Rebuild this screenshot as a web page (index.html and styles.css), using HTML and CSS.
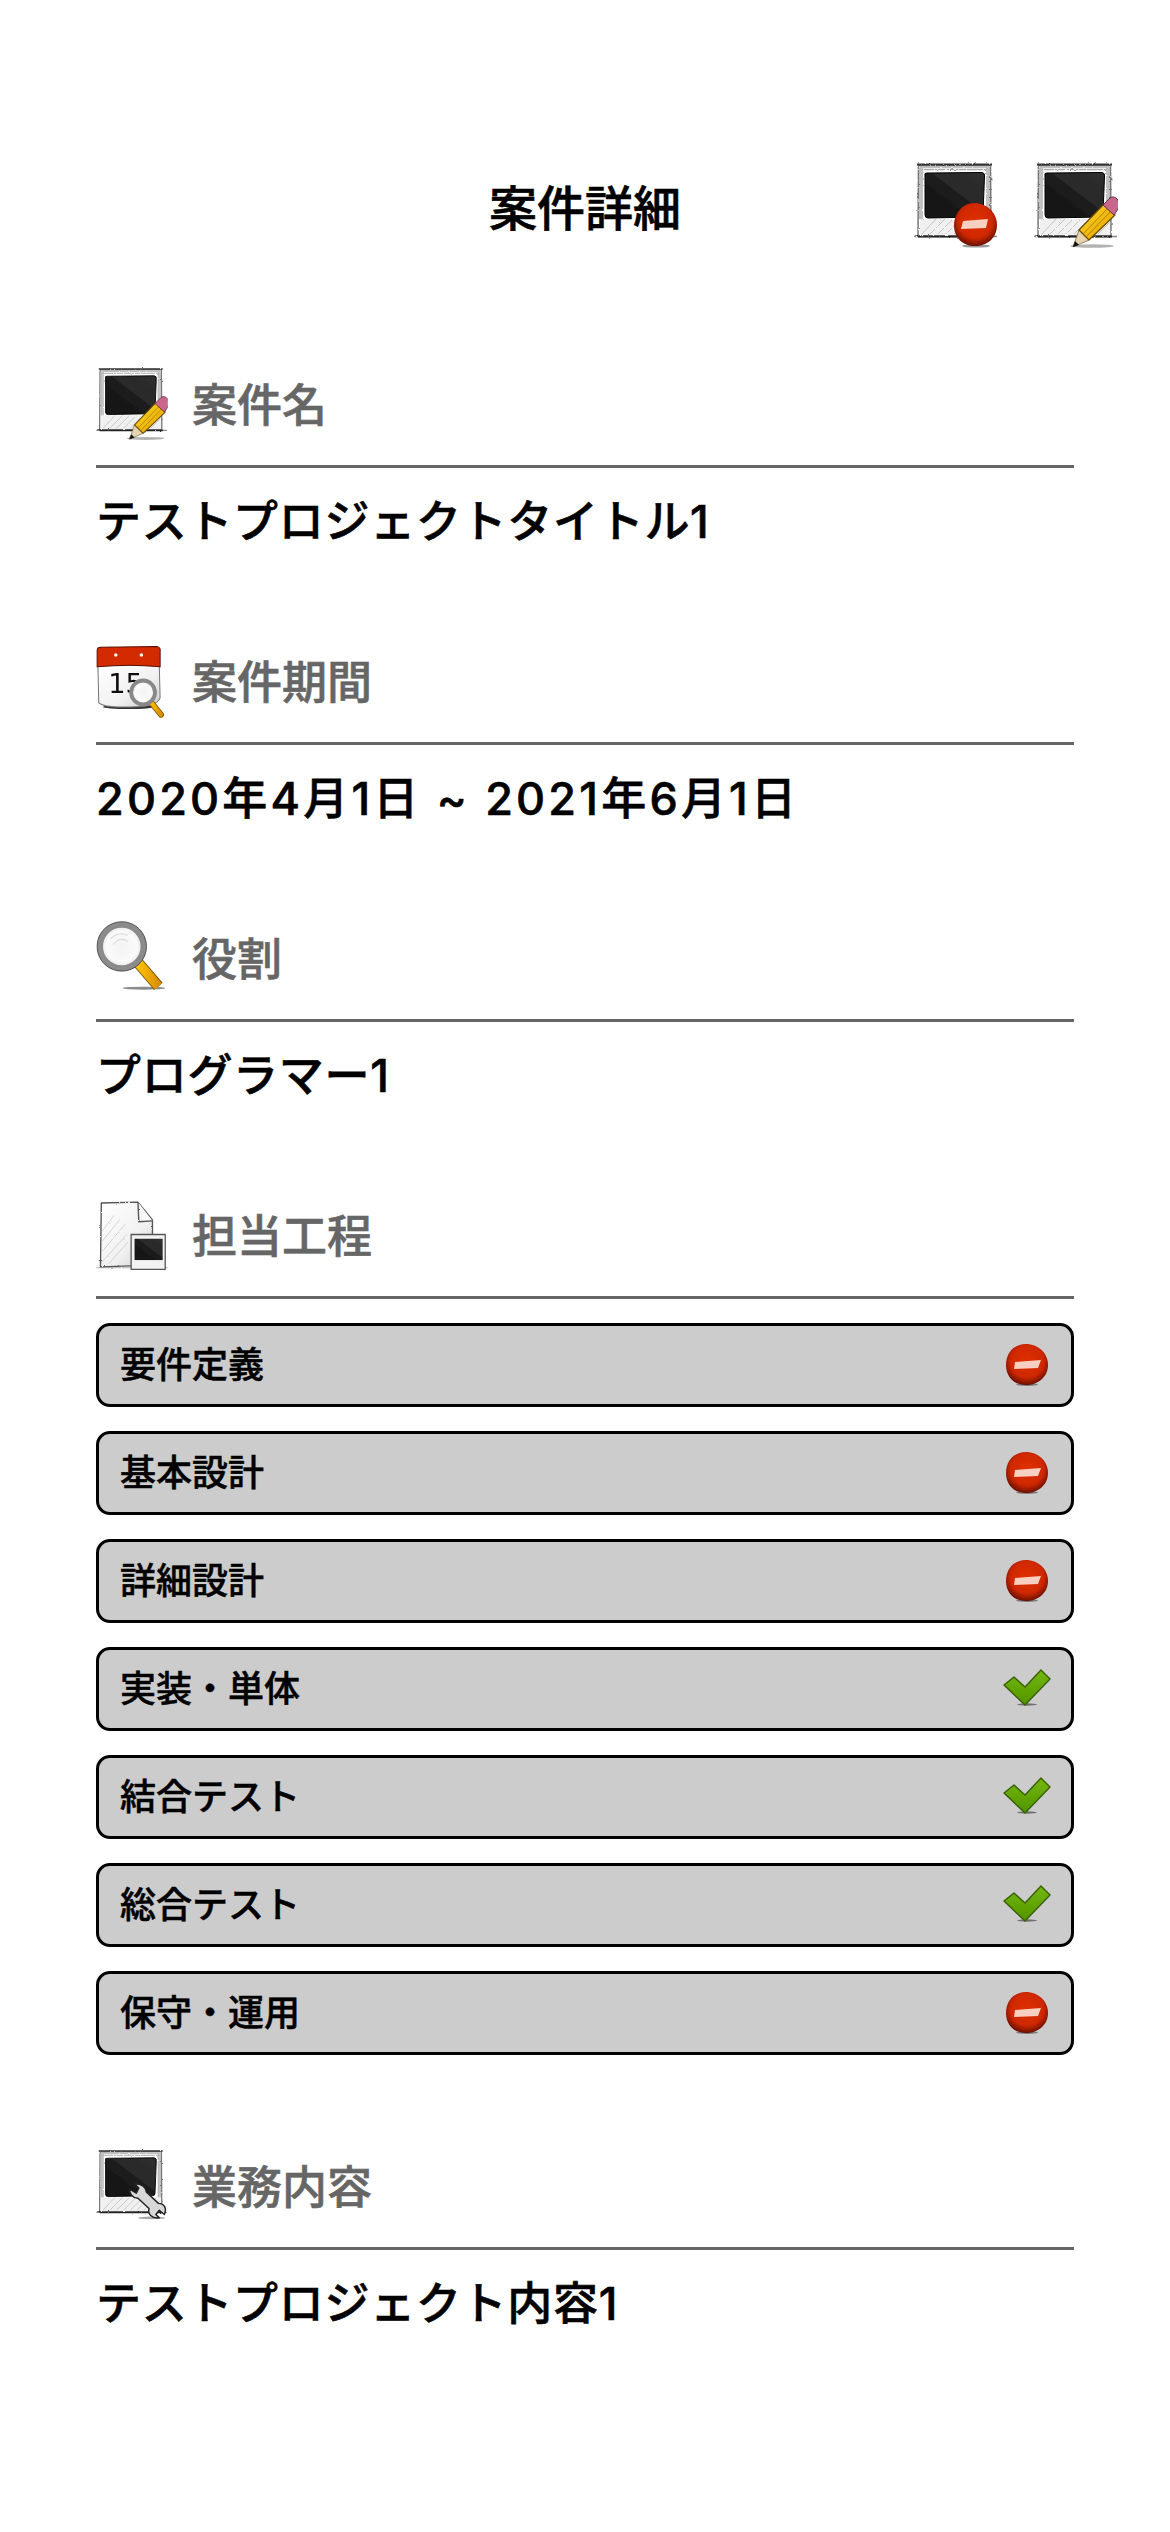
FILE: index.html
```html
<!DOCTYPE html>
<html lang="ja">
<head>
<meta charset="utf-8">
<title>案件詳細</title>
<link rel="stylesheet" href="styles.css">
</head>
<body>
<svg class="defs" aria-hidden="true">
  <defs>
    <filter id="soft" x="-10%" y="-10%" width="120%" height="120%"><feGaussianBlur stdDeviation=".45"/></filter>
    <filter id="sketch" x="-10%" y="-10%" width="120%" height="120%"><feTurbulence type="fractalNoise" baseFrequency=".35" numOctaves="2" seed="4"/><feDisplacementMap in="SourceGraphic" scale="2.500"/><feGaussianBlur stdDeviation=".35"/></filter>
    <linearGradient id="gScreen" x1="0" y1="1" x2="1" y2="0"><stop offset="0" stop-color="#111"/><stop offset=".55" stop-color="#1d1d1d"/><stop offset=".56" stop-color="#2a2a2a"/><stop offset="1" stop-color="#2e2e2e"/></linearGradient>
    <linearGradient id="gPaper" x1="0" y1="0" x2="1" y2="1"><stop offset="0" stop-color="#fff"/><stop offset=".6" stop-color="#f1f1f1"/><stop offset="1" stop-color="#c9c9c9"/></linearGradient>
    <radialGradient id="gRed" cx=".5" cy=".42" r=".58"><stop offset="0" stop-color="#e03000"/><stop offset=".68" stop-color="#cf2800"/><stop offset="1" stop-color="#6a1000"/></radialGradient>
    <linearGradient id="gPencil" x1="0" y1="0" x2="1" y2="1"><stop offset="0" stop-color="#ffdd22"/><stop offset="1" stop-color="#e09a00"/></linearGradient>
    <linearGradient id="gHandle" x1="0" y1="0" x2="1" y2="0"><stop offset="0" stop-color="#ffc400"/><stop offset="1" stop-color="#d98f00"/></linearGradient>
    <linearGradient id="gGreen" x1="0" y1="0" x2="0" y2="1"><stop offset="0" stop-color="#76b80c"/><stop offset="1" stop-color="#4f9400"/></linearGradient>
    <radialGradient id="gLens" cx=".5" cy=".5" r=".5"><stop offset="0" stop-color="#f3f3f3"/><stop offset=".7" stop-color="#fafafa"/><stop offset="1" stop-color="#e4e4e4"/></radialGradient>
    <symbol id="frame" viewBox="0 0 84 88">
      <g filter="url(#sketch)">
        <path d="M0 75.500H83" stroke="#555" stroke-width="1.500" opacity=".7"/>
        <path d="M4.500 4.500L76.500 4 77 75 4 75Z" fill="#fff" stroke="#777" stroke-width="1.500" stroke-linejoin="round"/>
        <path d="M3 3.500H78" stroke="#333" stroke-width="2"/>
        <path d="M6 6H75M6 8.500H75" stroke="#aaa" stroke-width="1.400"/>
        <path d="M6 7V58M8 7V58M73 7V58M75 7V58" stroke="#bbb" stroke-width="1.800"/>
        <path d="M6 58H76V74H6Z" fill="#f0f0f0"/>
        <path d="M8 73L22 58M16 73L31 58M24 73L39 58M32 73L47 58M40 73L55 58M48 73L63 58M56 73L71 58M64 73L75 62" stroke="#c4c4c4" stroke-width="1"/>
        <path d="M4 75.500H78" stroke="#222" stroke-width="2.200"/>
      </g>
      <path d="M11 14Q10 12 13 12L68 11.500Q71 12 70.500 15L69 53Q69 56 66 56L14 57Q11 57 11 54Z" fill="url(#gScreen)" stroke="#000" stroke-width="1" filter="url(#soft)"/>
    </symbol>
    <symbol id="badge-lg" viewBox="0 0 84 88">
      <g filter="url(#soft)">
        <ellipse cx="62" cy="85" rx="14" ry="1.600" fill="#000" opacity=".4"/>
        <path d="M60 42C73 42 83 52 83 64C83 77 73 85 61 85C49 85 40 77 40 64C40 53 48 42 60 42Z" fill="url(#gRed)"/>
        <path d="M49 60L74 58 72 67 47 68Z" fill="#f8d0c2"/>
      </g>
    </symbol>
    <symbol id="pencil" viewBox="0 0 84 88">
      <g filter="url(#soft)">
        <ellipse cx="58" cy="85" rx="22" ry="1.800" fill="#000" opacity=".3"/>
        <path d="M39 86L45 69 55 79Z" fill="#e8d3b0" stroke="#665533" stroke-width=".7"/>
        <path d="M39 86L41 80 45 84Z" fill="#111"/>
        <path d="M45 69L70 43 81 54 55 79Z" fill="url(#gPencil)" stroke="#6a4a00" stroke-width="1.200" stroke-linejoin="round"/>
        <path d="M49 73L74 47M52 76L77 50" stroke="#a87400" stroke-width=".8"/>
        <path d="M69 44L76 37Q80 34 84 39Q87 44 84 48L80 54Z" fill="#c9668c" stroke="#66304a" stroke-width="1"/>
      </g>
    </symbol>
    <symbol id="wrench" viewBox="0 0 84 88">
      <g filter="url(#soft)">
        <ellipse cx="65" cy="82" rx="16" ry="1.600" fill="#000" opacity=".35"/>
        <path d="M39 48L47 53 50 47 45 42C52 42 58 45 59 52L73 65C80 65 83 71 80 78L74 73 70 78 74 82C65 83 60 77 62 71L49 59C43 59 39 54 39 48Z" fill="#d8d8d8" stroke="#222" stroke-width="1.700" stroke-linejoin="round"/>
      </g>
    </symbol>
    <symbol id="calendar" viewBox="0 0 84 88">
      <g filter="url(#soft)">
        <ellipse cx="38" cy="75" rx="30" ry="2.500" fill="#000" opacity=".8"/>
        <path d="M2 26H74L75 64Q72 75 40 75Q8 76 3 70Z" fill="url(#gPaper)" stroke="#777" stroke-width="1.200"/>
        <path d="M1 9Q1 5 5 5L71 4Q76 5 75 10L75 28Q40 24 1 28Z" fill="#d42c00" stroke="#5a1000" stroke-width="1.200"/>
        <circle cx="23" cy="14" r="2" fill="#fff"/><circle cx="53" cy="14" r="2" fill="#fff"/>
        <text x="14" y="59" class="cal-num">15</text>
        <path d="M63 68L76 84" stroke="#7a5600" stroke-width="7" stroke-linecap="round"/>
        <path d="M63 68L76 84" stroke="url(#gHandle)" stroke-width="5" stroke-linecap="round"/>
        <circle cx="55" cy="58" r="14" fill="url(#gLens)" stroke="#888" stroke-width="4.500"/>
      </g>
    </symbol>
    <symbol id="magnifier" viewBox="0 0 84 88">
      <g filter="url(#soft)">
        <ellipse cx="56" cy="80" rx="25" ry="1.800" fill="#000" opacity=".45"/>
        <path d="M49 50L73 78" stroke="#6f4f00" stroke-width="13"/>
        <path d="M49 50L73 78" stroke="url(#gHandle)" stroke-width="11"/>
        <circle cx="30" cy="31" r="25.500" fill="url(#gLens)" stroke="#8b8b8b" stroke-width="7"/>
        <circle cx="30" cy="31" r="29" fill="none" stroke="#444" stroke-width="1"/>
        <path d="M17 22Q25 13 37 18M20 29Q27 19 37 25" stroke="#ddd" stroke-width="1.500" fill="none"/>
      </g>
    </symbol>
    <symbol id="doc" viewBox="0 0 84 88">
      <g filter="url(#sketch)">
        <path d="M6 7L49 6 66 27 66 80 5 82Z" fill="url(#gPaper)" stroke="#555" stroke-width="1.600" stroke-linejoin="round"/>
        <path d="M49 6L50 29 66 28" fill="#f8f8f8" stroke="#555" stroke-width="1.600" stroke-linejoin="round"/>
        <path d="M7 40L22 20M7 52L28 26M7 64L34 32M7 76L36 44M14 79L38 52" stroke="#ccc" stroke-width="1"/>
        <path d="M0 83H84" stroke="#666" stroke-width="1" opacity=".6"/>
      </g>
      <g filter="url(#soft)">
        <path d="M41 44H81V85H41Z" fill="#f2f2f2" stroke="#555" stroke-width="1.500"/>
        <path d="M45 49H78V74H45Z" fill="url(#gScreen)"/>
      </g>
    </symbol>
    <symbol id="no" viewBox="0 0 44 44">
      <g filter="url(#soft)">
        <ellipse cx="22" cy="41.500" rx="11" ry="1.500" fill="#000" opacity=".4"/>
        <path d="M21 1C33 1 43 10 43 22C43 34 33 42 21 42C9 42 1 34 1 22C1 10 9 1 21 1Z" fill="url(#gRed)"/>
        <path d="M10 19L36 17 33 25 9 26Z" fill="#f8d0c2"/>
      </g>
    </symbol>
    <symbol id="check" viewBox="0 0 48 44">
      <g filter="url(#soft)">
        <ellipse cx="24" cy="37.500" rx="10" ry="1.200" fill="#000" opacity=".45"/>
        <path d="M1 18L11 10 22 20 38 3 47 12 22 38Z" fill="url(#gGreen)" stroke="#375f00" stroke-width="1.400" stroke-linejoin="round"/>
      </g>
    </symbol>
  </defs>
</svg>

<main class="page">
  <header class="top">
    <span></span>
    <h1 class="top-title">案件詳細</h1>
    <div class="top-actions">
      <svg class="ico-lg" viewBox="0 0 84 88"><use href="#frame"/><use href="#badge-lg"/></svg>
      <svg class="ico-lg" viewBox="0 0 84 88"><use href="#frame"/><use href="#pencil"/></svg>
    </div>
  </header>

  <section class="sec">
    <div class="sec-head">
      <svg class="ico" viewBox="0 0 84 88"><use href="#frame"/><use href="#pencil"/></svg>
      <h2 class="sec-label">案件名</h2>
    </div>
    <p class="sec-value">テストプロジェクトタイトル1</p>
  </section>

  <section class="sec">
    <div class="sec-head">
      <svg class="ico" viewBox="0 0 84 88"><use href="#calendar"/></svg>
      <h2 class="sec-label">案件期間</h2>
    </div>
    <p class="sec-value sec-date">2020年4月1日 ~ 2021年6月1日</p>
  </section>

  <section class="sec">
    <div class="sec-head">
      <svg class="ico" viewBox="0 0 84 88"><use href="#magnifier"/></svg>
      <h2 class="sec-label">役割</h2>
    </div>
    <p class="sec-value">プログラマー1</p>
  </section>

  <section class="sec sec-list">
    <div class="sec-head">
      <svg class="ico" viewBox="0 0 84 88"><use href="#doc"/></svg>
      <h2 class="sec-label">担当工程</h2>
    </div>
    <ul class="steps">
      <li class="step"><span>要件定義</span><svg class="st-ico" viewBox="0 0 44 44"><use href="#no"/></svg></li>
      <li class="step"><span>基本設計</span><svg class="st-ico" viewBox="0 0 44 44"><use href="#no"/></svg></li>
      <li class="step"><span>詳細設計</span><svg class="st-ico" viewBox="0 0 44 44"><use href="#no"/></svg></li>
      <li class="step"><span>実装・単体</span><svg class="st-ico" viewBox="0 0 48 44"><use href="#check"/></svg></li>
      <li class="step"><span>結合テスト</span><svg class="st-ico" viewBox="0 0 48 44"><use href="#check"/></svg></li>
      <li class="step"><span>総合テスト</span><svg class="st-ico" viewBox="0 0 48 44"><use href="#check"/></svg></li>
      <li class="step"><span>保守・運用</span><svg class="st-ico" viewBox="0 0 44 44"><use href="#no"/></svg></li>
    </ul>
  </section>

  <section class="sec">
    <div class="sec-head">
      <svg class="ico" viewBox="0 0 84 88"><use href="#frame"/><use href="#wrench"/></svg>
      <h2 class="sec-label">業務内容</h2>
    </div>
    <p class="sec-value">テストプロジェクト内容1</p>
  </section>
</main>
</body>
</html>
```

FILE: styles.css
```css
* { box-sizing: border-box; }
html, body { margin: 0; padding: 0; background: #fff; }
body { font-family: "Noto Sans CJK JP", "Noto Sans", sans-serif; color: #000; }
.defs { display: block; width: 0; height: 0; overflow: hidden; }
.page { padding: 161px 96px 0; width: 1170px; height: 2532px; overflow: hidden; }

.top { display: grid; grid-template-columns: 1fr auto 1fr; align-items: center; height: 88px; margin: 0 -44px 117px 0; }
.top-title { margin: 0; font-size: 48px; font-weight: 500; -webkit-text-stroke: .6px #000; line-height: 60px; position: relative; left: -22px; }
.top-actions { display: flex; justify-content: flex-end; gap: 36px; }
.ico-lg { display: block; width: 84px; height: 88px; overflow: visible; }

.sec { margin-bottom: 91px; }
.sec-list { margin-bottom: 93px; }
.sec-head { display: flex; align-items: center; gap: 24px; height: 102px; padding-bottom: 24px; border-bottom: 3px solid #666; }
.ico { display: block; width: 72px; height: 75px; overflow: visible; flex: none; }
.sec-label { margin: 0; font-size: 45px; font-weight: 500; -webkit-text-stroke: .6px #666; color: #666; line-height: 60px; position: relative; top: -1px; }
.sec-value { margin: 0; padding-top: 24px; font-family: Inter, "Noto Sans CJK JP", sans-serif; font-size: 45px; font-weight: 500; -webkit-text-stroke: .6px #000; letter-spacing: .7px; line-height: 60px; }
.sec-date { letter-spacing: 3.2px; }
.cal-num { font-family: "DejaVu Sans", sans-serif; font-size: 32px; fill: #111; }

.steps { list-style: none; margin: 24px 0 0; padding: 0; display: flex; flex-direction: column; gap: 24px; }
.step { display: flex; align-items: center; justify-content: space-between; height: 84px; padding: 0 20px 0 21px; background: #ccc; border: 3px solid #000; border-radius: 14px; font-size: 36px; font-weight: 500; -webkit-text-stroke: .5px #000; }
.step span { position: relative; top: -3px; }
.st-ico { display: block; width: 48px; height: 44px; overflow: visible; }
```
